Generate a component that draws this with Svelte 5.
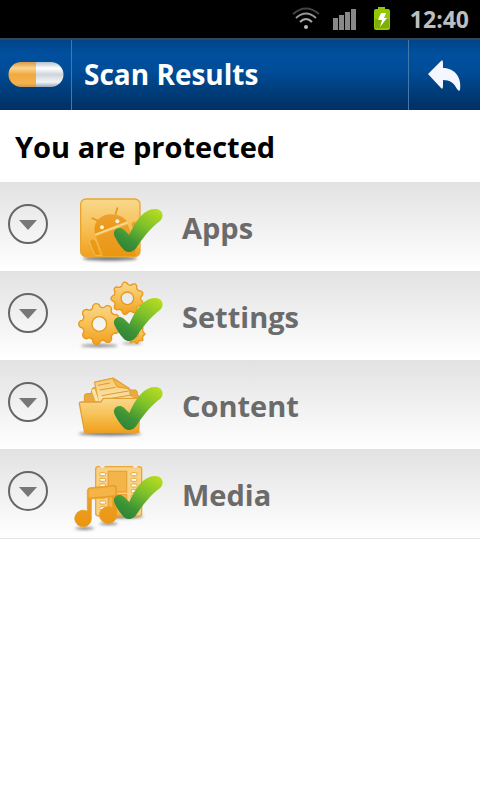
<script lang="ts">
  type Kind = "apps" | "settings" | "content" | "media";

  interface Category {
    kind: Kind;
    label: string;
  }

  const categories: Category[] = [
    { kind: "apps", label: "Apps" },
    { kind: "settings", label: "Settings" },
    { kind: "content", label: "Content" },
    { kind: "media", label: "Media" },
  ];

  // rounded cog outline, the hole is left open by the evenodd fill
  function gear(cx: number, cy: number, outer: number, inner: number, hole: number, teeth: number, turn = 0): string {
    const step = (Math.PI * 2) / teeth;
    const at = (r: number, a: number) => `${(cx + r * Math.cos(a)).toFixed(1)} ${(cy + r * Math.sin(a)).toFixed(1)}`;
    let d = `M${at(inner, turn - step * 0.5)}`;
    for (let i = 0; i < teeth; i++) {
      const a = i * step + turn;
      d += `Q${at(inner, a - step * 0.3)} ${at(outer - 5, a - step * 0.24)}`;
      d += `Q${at(outer + 4, a)} ${at(outer - 5, a + step * 0.24)}`;
      d += `Q${at(inner, a + step * 0.3)} ${at(inner, a + step * 0.5)}`;
    }
    d += `ZM${cx - hole} ${cy}a${hole} ${hole} 0 1 0 ${hole * 2} 0a${hole} ${hole} 0 1 0 ${-hole * 2} 0Z`;
    return d;
  }

  const gears = [
    gear(226, 180, 30, 24, 9, 9),
    gear(202, 73, 50, 40, 19, 9, -1.75),
    gear(118, 150, 63, 50, 22, 9, -1.75),
  ];

  const holes = [0, 1, 2, 3, 4, 5, 6];
</script>

<svg class="defs" width="0" height="0" aria-hidden="true">
  <defs>
    <linearGradient id="amber" x1="0" y1="0" x2="0" y2="1">
      <stop offset="0" stop-color="#f9d88c" />
      <stop offset="0.5" stop-color="#f7c055" />
      <stop offset="1" stop-color="#f0a01c" />
    </linearGradient>
    <linearGradient id="orange" x1="0" y1="0" x2="0" y2="1">
      <stop offset="0" stop-color="#eca131" />
      <stop offset="1" stop-color="#ea960f" />
    </linearGradient>
    <linearGradient id="paper" x1="0" y1="0" x2="0" y2="1">
      <stop offset="0" stop-color="#f8ca70" />
      <stop offset="1" stop-color="#fce7b0" />
    </linearGradient>
    <linearGradient id="green" x1="0.85" y1="0" x2="0.2" y2="1">
      <stop offset="0" stop-color="#b5dc20" />
      <stop offset="0.4" stop-color="#7cbf2b" />
      <stop offset="0.75" stop-color="#3d9436" />
      <stop offset="1" stop-color="#2f8238" />
    </linearGradient>
    <filter id="soft" x="-20%" y="-100%" width="140%" height="300%">
      <feGaussianBlur stdDeviation="4" />
    </filter>
  </defs>
</svg>

<div class="screen">
  <div class="status-bar">
    <svg width="28" height="24" viewBox="0 0 28 24" fill="none" stroke-width="2" aria-hidden="true">
      <path d="M1 7Q14 -4 27 7" stroke="#444" />
      <path d="M4 11Q14 2 24 11" stroke="#999" />
      <path d="M8 15Q14 9 20 15" stroke="#aaa" />
      <circle cx="14" cy="20" r="2" fill="#bbb" />
    </svg>
    <svg width="28" height="24" viewBox="0 0 28 24" fill="#888" aria-hidden="true">
      <rect x="1" y="11" width="5" height="12" />
      <rect x="7" y="8" width="5" height="15" />
      <rect x="13" y="5" width="5" height="18" />
      <rect x="19" y="2" width="5" height="21" />
    </svg>
    <svg width="20" height="24" viewBox="0 0 20 24" aria-hidden="true">
      <path d="M6 0h7v2h3q2 0 2 2v17q0 2-2 2H4q-2 0-2-2V4q0-2 2-2h2z" fill="#92c803" />
      <path d="M3 12h14v9H3z" fill="#7fae05" />
      <path d="M9 6h5l-2 5h3l-7 9 2-7H6z" fill="#fff" />
    </svg>
    <time class="clock">12:40</time>
  </div>

  <header class="title-bar">
    <div class="brand">
      <svg width="56" height="28" viewBox="0 0 56 28" role="img" aria-label="Logo">
        <defs>
          <linearGradient id="pillLeft" x1="0" y1="0" x2="0" y2="1">
            <stop offset="0" stop-color="#d99a45" />
            <stop offset="0.25" stop-color="#fad590" />
            <stop offset="0.5" stop-color="#efa93f" />
            <stop offset="0.85" stop-color="#f5b34b" />
            <stop offset="1" stop-color="#c99652" />
          </linearGradient>
          <linearGradient id="pillRight" x1="0" y1="0" x2="0" y2="1">
            <stop offset="0" stop-color="#b4c0d0" />
            <stop offset="0.25" stop-color="#fff" />
            <stop offset="0.5" stop-color="#cfd5dc" />
            <stop offset="0.8" stop-color="#f2f4f6" />
            <stop offset="1" stop-color="#98a8bc" />
          </linearGradient>
        </defs>
        <path d="M28 1H13a12 12 0 0 0 0 25h15z" fill="url(#pillLeft)" />
        <path d="M28 1h15a12 12 0 0 1 0 25H28z" fill="url(#pillRight)" />
      </svg>
    </div>
    <h1 class="title">Scan Results</h1>
    <button class="back" type="button" aria-label="Back">
      <svg width="36" height="34" viewBox="0 0 36 34" aria-hidden="true">
        <path d="M1 16L14 3Q16 1 16 5V10C28 10 35 20 33 32Q32 34 30 31C27 25 23 22 16 22V28Q16 32 14 30Z" fill="#f4f7ff" />
      </svg>
    </button>
  </header>

  <main>
    <h2 class="summary">You are protected</h2>
    <ul class="results">
      {#each categories as category (category.kind)}
        <li class="row">
          <button class="expand" type="button" aria-label="Show {category.label} details">
            <svg width="20" height="12" viewBox="0 0 20 12" aria-hidden="true">
              <path d="M1 2H19L10 12Z" fill="#777" />
            </svg>
          </button>
          <svg class="icon" viewBox="0 -9 360 267" aria-hidden="true">
            {#if category.kind === "apps"}
              <ellipse cx="150" cy="220" rx="82" ry="7" fill="#777" filter="url(#soft)" />
              <rect x="62" y="42" width="178" height="173" rx="16" fill="url(#amber)" stroke="#e9a62d" stroke-width="4" />
              <path d="M105 146C97 112 120 90 150 88C175 87 194 98 200 109Z" fill="url(#orange)" />
              <path d="M111 106L97 100M167 86L172 69" stroke="#e2951b" stroke-width="5" stroke-linecap="round" />
              <path d="M108 154L203 118L226 178V213H130Z" fill="url(#orange)" />
              <path d="M106 149L202 113" stroke="#fbdc95" stroke-width="4" />
              <path d="M89 172Q88 161 98 161Q105 161 109 170L124 211H105ZM213 116Q222 103 233 113L237 126V190Z" fill="url(#orange)" stroke="#f7c76a" stroke-width="2" />
              <circle cx="126" cy="127" r="6" fill="#fff3cc" />
              <circle cx="172" cy="109" r="6" fill="#fff3cc" />
            {:else if category.kind === "settings"}
              <ellipse cx="118" cy="215" rx="55" ry="4" fill="#777" filter="url(#soft)" />
              <ellipse cx="216" cy="208" rx="30" ry="3" fill="#888" filter="url(#soft)" />
              {#each gears as d}
                <path {d} fill="url(#amber)" fill-rule="evenodd" stroke="#e8981c" stroke-width="4" stroke-linejoin="round" />
              {/each}
            {:else if category.kind === "content"}
              <ellipse cx="150" cy="212" rx="94" ry="6" fill="#777" filter="url(#soft)" />
              <path d="M73 118V98Q74 92 80 92H93L96 78Q98 72 107 74L104 57L160 45L208 76L211 81H226Q232 82 232 92L240 110V130H73Z" fill="#eba942" stroke="#de9b28" stroke-width="3" />
              <path d="M104 58L158 46L171 70L206 77L211 98L228 105L116 120L112 97Z" fill="url(#paper)" stroke="#e6a43a" stroke-width="3" />
              <path d="M158 46L208 76L171 72Z" fill="#f2b64c" stroke="#e6a43a" stroke-width="3" />
              <path d="M94 80L107 115H116L104 78Z" fill="#fce6ac" />
              <path d="M113 67L150 60M119 81L166 73M125 98L205 84M131 110L213 96" stroke="#d79b42" stroke-width="3" />
              <path d="M58 121Q58 117 64 117H122L130 106H240L236 208H74Z" fill="url(#amber)" stroke="#e4a032" stroke-width="4" stroke-linejoin="round" />
            {:else}
              <ellipse cx="190" cy="193" rx="60" ry="6" fill="#777" filter="url(#soft)" />
              <ellipse cx="74" cy="229" rx="29" ry="4" fill="#777" filter="url(#soft)" />
              <ellipse cx="146" cy="215" rx="27" ry="4" fill="#777" filter="url(#soft)" />
              <rect x="107" y="44" width="138" height="148" rx="8" fill="#f8d182" stroke="#eaa83b" stroke-width="4" />
              <path d="M119 42Q127 54 135 42ZM218 42Q226 54 234 42Z" fill="#eee" />
              <rect x="145" y="58" width="55" height="62" fill="#f3b449" stroke="#eba43b" stroke-width="4" />
              <rect x="145" y="128" width="55" height="62" fill="#f3b449" stroke="#eba43b" stroke-width="4" />
              {#each holes as n}
                <rect x="119" y={62 + n * 17} width="18" height="9" rx="4" fill="#fff" stroke="#e9a537" stroke-width="3" />
                <rect x="213" y={62 + n * 17} width="18" height="9" rx="4" fill="#fff" stroke="#e9a537" stroke-width="3" />
              {/each}
              <path d="M82 116Q82 108 90 107L162 100Q170 100 170 107V193A26 25 0 1 1 158 168V134L94 141V203A25 25 0 1 1 82 178Z" fill="url(#orange)" stroke="#e99a20" stroke-width="2" />
              <path d="M86 116Q86 111 92 111L160 104Q166 104 166 109V129L86 137Z" fill="#f5b448" />
            {/if}
            <path d="M163 152C157 133 177 122 192 134L208 150C223 116 247 74 283 72C307 70 315 93 301 107C269 130 243 166 228 190C217 204 202 204 192 195C180 183 170 167 163 152Z" fill="url(#green)" />
          </svg>
          <span class="label">{category.label}</span>
        </li>
      {/each}
    </ul>
  </main>
</div>

<style>
  :global(body) {
    margin: 0;
    background: #fff;
  }

  .screen {
    font-family: "Open Sans", "Noto Sans", sans-serif;
    font-weight: 700;
  }

  .defs {
    position: absolute;
  }

  svg {
    display: block;
  }

  .status-bar {
    height: 38px;
    padding: 0 11px;
    display: flex;
    align-items: center;
    justify-content: flex-end;
    gap: 12px;
    background: #000;
  }

  .clock {
    margin-left: 6px;
    color: #bebebe;
    font-size: 23px;
    line-height: 38px;
  }

  .title-bar {
    height: 70px;
    display: flex;
    border-top: 2px solid #34465a;
    background: linear-gradient(#004487, #00509f 20%, #004c97 45%, #003c79 75%, #002f64);
  }

  .brand {
    width: 71px;
    display: grid;
    place-items: center;
    border-right: 1px solid #4378ad;
  }

  .title {
    flex: 1;
    margin: 0;
    padding-left: 12px;
    color: #fff;
    font-size: 28px;
    line-height: 68px;
  }

  .back {
    width: 72px;
    padding: 0;
    display: grid;
    place-items: center;
    border: 0;
    border-left: 1px solid #4378ad;
    background: none;
    cursor: pointer;
  }

  .summary {
    margin: 0;
    padding: 2px 15px 0;
    color: #000;
    font-size: 29px;
    line-height: 70px;
  }

  .results {
    margin: 0;
    padding: 0;
    list-style: none;
    border-bottom: 1px solid #e3e3e3;
  }

  .row {
    height: 89px;
    display: flex;
    align-items: center;
    padding: 0 8px;
    background: linear-gradient(#e2e2e2, #fff);
  }

  .expand {
    box-sizing: border-box;
    width: 40px;
    height: 40px;
    margin-bottom: 6px;
    padding: 0;
    display: grid;
    place-items: center;
    border: 2px solid #666;
    border-radius: 50%;
    background: none;
    cursor: pointer;
  }

  .icon {
    width: 120px;
    height: 89px;
    margin-left: 12px;
  }

  .label {
    padding: 2px 0 0 2px;
    color: #6b6b6b;
    font-size: 29px;
    line-height: 40px;
  }
</style>
